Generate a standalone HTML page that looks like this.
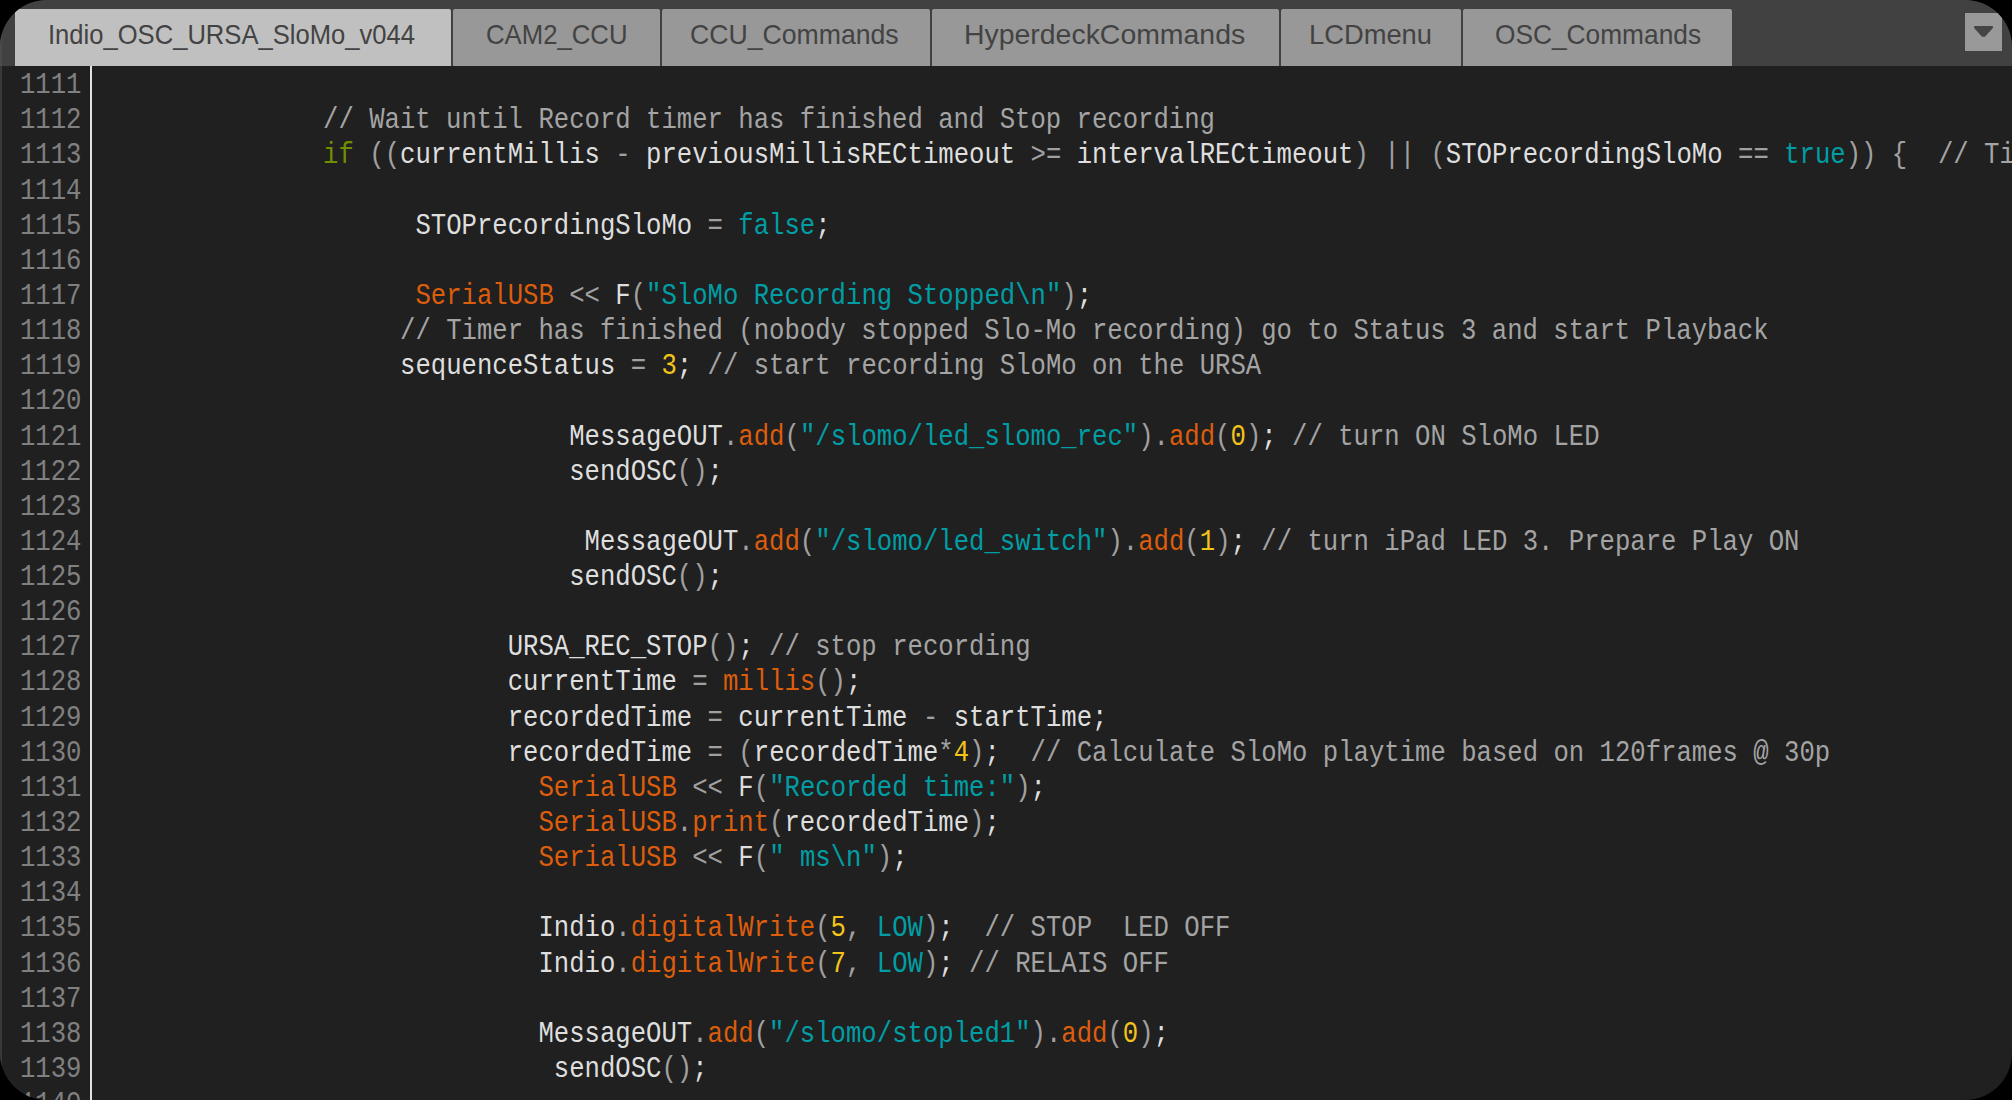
<!DOCTYPE html>
<html><head><meta charset="utf-8"><style>
html,body{margin:0;padding:0;background:#000;width:2012px;height:1100px;overflow:hidden}
#win{position:absolute;left:0;top:0;width:2012px;height:1100px;border-radius:47px;overflow:hidden;background:#202020}
#bar{position:absolute;left:0;top:0;width:2012px;height:66px;background:#414141}
#lb1{position:absolute;left:0;top:0;width:2px;height:66px;background:#4b4b4b}
#lb2{position:absolute;left:0;top:66px;width:2px;height:1034px;background:#393939}
.tab{position:absolute;top:9px;height:57px;background:#989898;border-radius:2px 2px 0 0;text-align:center;overflow:hidden}
.tab.act{background:#c0c0c0}
.tab span{position:absolute;line-height:1;font-family:"Liberation Sans",sans-serif;font-size:25.4px;color:#434343;white-space:pre;transform-origin:0 0;top:11.8px}
#dd{position:absolute;left:1965px;top:13px;width:37px;height:38px;background:#999}
#dd svg{position:absolute;left:0;top:0}
#sep{position:absolute;left:90px;top:66px;width:2px;height:1034px;background:#e2e2e2}
.ln,.num{position:absolute;white-space:pre;font-family:"Liberation Mono",monospace;font-size:25.63px;line-height:0;height:0;transform:scaleY(1.12);transform-origin:0 0}
.num{left:0;width:81.5px;text-align:right;color:#808080}
.t{color:#dedede} .c{color:#a4a4a4} .k{color:#728e00} .l{color:#009ea4} .f{color:#dc5d0c} .n{color:#f2c31b} .p{color:#a0a0a0}
</style></head><body>
<div id="win">
<div id="bar"></div>
<div id="lb1"></div>
<div class="tab act" style="left:15px;width:436px"><span style="left:32.68px;transform:scale(1.0077,1.08)">Indio_OSC_URSA_SloMo_v044</span></div><div class="tab" style="left:453px;width:206.5px"><span style="left:32.59px;transform:scale(1.0131,1.08)">CAM2_CCU</span></div><div class="tab" style="left:661.8px;width:268.20000000000005px"><span style="left:28.15px;transform:scale(1.0487,1.08)">CCU_Commands</span></div><div class="tab" style="left:932px;width:347px"><span style="left:32.46px;transform:scale(1.1194,1.08)">HyperdeckCommands</span></div><div class="tab" style="left:1281px;width:180px"><span style="left:28.25px;transform:scale(1.0757,1.08)">LCDmenu</span></div><div class="tab" style="left:1463px;width:268.5px"><span style="left:31.66px;transform:scale(1.0355,1.08)">OSC_Commands</span></div>
<div id="dd"><svg width="37" height="38"><polygon points="9.1,12.9 27.9,12.9 27.9,15 19.9,23.8 17,23.8 9.1,15" fill="#454545"/></svg></div>
<div id="lb2"></div>
<div id="sep"></div>
<div class="num" style="top:86.10px">1111</div><div class="num" style="top:121.24px">1112</div><div class="num" style="top:156.38px">1113</div><div class="num" style="top:191.52px">1114</div><div class="num" style="top:226.66px">1115</div><div class="num" style="top:261.80px">1116</div><div class="num" style="top:296.94px">1117</div><div class="num" style="top:332.08px">1118</div><div class="num" style="top:367.22px">1119</div><div class="num" style="top:402.36px">1120</div><div class="num" style="top:437.50px">1121</div><div class="num" style="top:472.64px">1122</div><div class="num" style="top:507.78px">1123</div><div class="num" style="top:542.92px">1124</div><div class="num" style="top:578.06px">1125</div><div class="num" style="top:613.20px">1126</div><div class="num" style="top:648.34px">1127</div><div class="num" style="top:683.48px">1128</div><div class="num" style="top:718.62px">1129</div><div class="num" style="top:753.76px">1130</div><div class="num" style="top:788.90px">1131</div><div class="num" style="top:824.04px">1132</div><div class="num" style="top:859.18px">1133</div><div class="num" style="top:894.32px">1134</div><div class="num" style="top:929.46px">1135</div><div class="num" style="top:964.60px">1136</div><div class="num" style="top:999.74px">1137</div><div class="num" style="top:1034.88px">1138</div><div class="num" style="top:1070.02px">1139</div><div class="num" style="top:1105.16px">1140</div>
<div class="ln" style="top:121.24px;left:323.10px"><span class="c">// Wait until Record timer has finished and Stop recording</span></div><div class="ln" style="top:156.38px;left:323.10px"><span class="k">if</span><span class="t"> </span><span class="p">((</span><span class="t">currentMillis </span><span class="p">-</span><span class="t"> previousMillisRECtimeout </span><span class="p">&gt;=</span><span class="t"> intervalRECtimeout</span><span class="p">)</span><span class="t"> </span><span class="p">||</span><span class="t"> </span><span class="p">(</span><span class="t">STOPrecordingSloMo </span><span class="p">==</span><span class="t"> </span><span class="l">true</span><span class="p">))</span><span class="t"> </span><span class="p">{</span><span class="t">  </span><span class="c">// Timer has finished</span></div><div class="ln" style="top:226.66px;left:415.38px"><span class="t">STOPrecordingSloMo </span><span class="p">=</span><span class="t"> </span><span class="l">false</span><span class="t">;</span></div><div class="ln" style="top:296.94px;left:415.38px"><span class="f">SerialUSB</span><span class="t"> </span><span class="p">&lt;&lt;</span><span class="t"> F</span><span class="p">(</span><span class="l">&quot;SloMo Recording Stopped\n&quot;</span><span class="p">)</span><span class="t">;</span></div><div class="ln" style="top:332.08px;left:400.00px"><span class="c">// Timer has finished (nobody stopped Slo-Mo recording) go to Status 3 and start Playback</span></div><div class="ln" style="top:367.22px;left:400.00px"><span class="t">sequenceStatus </span><span class="p">=</span><span class="t"> </span><span class="n">3</span><span class="t">; </span><span class="c">// start recording SloMo on the URSA</span></div><div class="ln" style="top:437.50px;left:569.18px"><span class="t">MessageOUT</span><span class="p">.</span><span class="f">add</span><span class="p">(</span><span class="l">&quot;/slomo/led_slomo_rec&quot;</span><span class="p">).</span><span class="f">add</span><span class="p">(</span><span class="n">0</span><span class="p">)</span><span class="t">; </span><span class="c">// turn ON SloMo LED</span></div><div class="ln" style="top:472.64px;left:569.18px"><span class="t">sendOSC</span><span class="p">()</span><span class="t">;</span></div><div class="ln" style="top:542.92px;left:584.56px"><span class="t">MessageOUT</span><span class="p">.</span><span class="f">add</span><span class="p">(</span><span class="l">&quot;/slomo/led_switch&quot;</span><span class="p">).</span><span class="f">add</span><span class="p">(</span><span class="n">1</span><span class="p">)</span><span class="t">; </span><span class="c">// turn iPad LED 3. Prepare Play ON</span></div><div class="ln" style="top:578.06px;left:569.18px"><span class="t">sendOSC</span><span class="p">()</span><span class="t">;</span></div><div class="ln" style="top:648.34px;left:507.66px"><span class="t">URSA_REC_STOP</span><span class="p">()</span><span class="t">; </span><span class="c">// stop recording</span></div><div class="ln" style="top:683.48px;left:507.66px"><span class="t">currentTime </span><span class="p">=</span><span class="t"> </span><span class="f">millis</span><span class="p">()</span><span class="t">;</span></div><div class="ln" style="top:718.62px;left:507.66px"><span class="t">recordedTime </span><span class="p">=</span><span class="t"> currentTime </span><span class="p">-</span><span class="t"> startTime;</span></div><div class="ln" style="top:753.76px;left:507.66px"><span class="t">recordedTime </span><span class="p">=</span><span class="t"> </span><span class="p">(</span><span class="t">recordedTime</span><span class="p">*</span><span class="n">4</span><span class="p">)</span><span class="t">;  </span><span class="c">// Calculate SloMo playtime based on 120frames @ 30p</span></div><div class="ln" style="top:788.90px;left:538.42px"><span class="f">SerialUSB</span><span class="t"> </span><span class="p">&lt;&lt;</span><span class="t"> F</span><span class="p">(</span><span class="l">&quot;Recorded time:&quot;</span><span class="p">)</span><span class="t">;</span></div><div class="ln" style="top:824.04px;left:538.42px"><span class="f">SerialUSB</span><span class="p">.</span><span class="f">print</span><span class="p">(</span><span class="t">recordedTime</span><span class="p">)</span><span class="t">;</span></div><div class="ln" style="top:859.18px;left:538.42px"><span class="f">SerialUSB</span><span class="t"> </span><span class="p">&lt;&lt;</span><span class="t"> F</span><span class="p">(</span><span class="l">&quot; ms\n&quot;</span><span class="p">)</span><span class="t">;</span></div><div class="ln" style="top:929.46px;left:538.42px"><span class="t">Indio</span><span class="p">.</span><span class="f">digitalWrite</span><span class="p">(</span><span class="n">5</span><span class="p">,</span><span class="t"> </span><span class="l">LOW</span><span class="p">)</span><span class="t">;  </span><span class="c">// STOP  LED OFF</span></div><div class="ln" style="top:964.60px;left:538.42px"><span class="t">Indio</span><span class="p">.</span><span class="f">digitalWrite</span><span class="p">(</span><span class="n">7</span><span class="p">,</span><span class="t"> </span><span class="l">LOW</span><span class="p">)</span><span class="t">; </span><span class="c">// RELAIS OFF</span></div><div class="ln" style="top:1034.88px;left:538.42px"><span class="t">MessageOUT</span><span class="p">.</span><span class="f">add</span><span class="p">(</span><span class="l">&quot;/slomo/stopled1&quot;</span><span class="p">).</span><span class="f">add</span><span class="p">(</span><span class="n">0</span><span class="p">)</span><span class="t">;</span></div><div class="ln" style="top:1070.02px;left:553.80px"><span class="t">sendOSC</span><span class="p">()</span><span class="t">;</span></div>
</div>
</body></html>
